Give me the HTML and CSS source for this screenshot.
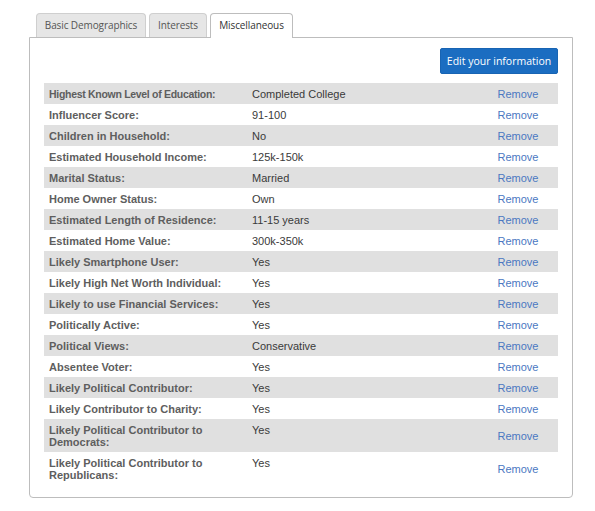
FILE: index.html
```html
<!DOCTYPE html>
<html>
<head>
<meta charset="utf-8">
<link rel="stylesheet" href="styles.css">
</head>
<body>
<div class="wrap">
  <div class="tabs">
    <div class="tab tab-basic">Basic Demographics</div>
    <div class="tab tab-interests">Interests</div>
    <div class="tab tab-misc active">Miscellaneous</div>
  </div>
  <div class="panel">
    <div class="actions"><button class="btn">Edit your information</button></div>
    <table class="info">
      <tr><th class="tight">Highest Known Level of Education:</th><td class="val">Completed College</td><td class="rm"><a>Remove</a></td></tr>
      <tr><th>Influencer Score:</th><td class="val">91-100</td><td class="rm"><a>Remove</a></td></tr>
      <tr><th>Children in Household:</th><td class="val">No</td><td class="rm"><a>Remove</a></td></tr>
      <tr><th>Estimated Household Income:</th><td class="val">125k-150k</td><td class="rm"><a>Remove</a></td></tr>
      <tr><th>Marital Status:</th><td class="val">Married</td><td class="rm"><a>Remove</a></td></tr>
      <tr><th>Home Owner Status:</th><td class="val">Own</td><td class="rm"><a>Remove</a></td></tr>
      <tr><th>Estimated Length of Residence:</th><td class="val">11-15 years</td><td class="rm"><a>Remove</a></td></tr>
      <tr><th>Estimated Home Value:</th><td class="val">300k-350k</td><td class="rm"><a>Remove</a></td></tr>
      <tr><th>Likely Smartphone User:</th><td class="val">Yes</td><td class="rm"><a>Remove</a></td></tr>
      <tr><th>Likely High Net Worth Individual:</th><td class="val">Yes</td><td class="rm"><a>Remove</a></td></tr>
      <tr><th>Likely to use Financial Services:</th><td class="val">Yes</td><td class="rm"><a>Remove</a></td></tr>
      <tr><th>Politically Active:</th><td class="val">Yes</td><td class="rm"><a>Remove</a></td></tr>
      <tr><th>Political Views:</th><td class="val">Conservative</td><td class="rm"><a>Remove</a></td></tr>
      <tr><th>Absentee Voter:</th><td class="val">Yes</td><td class="rm"><a>Remove</a></td></tr>
      <tr><th>Likely Political Contributor:</th><td class="val">Yes</td><td class="rm"><a>Remove</a></td></tr>
      <tr><th>Likely Contributor to Charity:</th><td class="val">Yes</td><td class="rm"><a>Remove</a></td></tr>
      <tr><th>Likely Political Contributor to<br>Democrats:</th><td class="val">Yes</td><td class="rm"><a>Remove</a></td></tr>
      <tr><th>Likely Political Contributor to<br>Republicans:</th><td class="val">Yes</td><td class="rm"><a>Remove</a></td></tr>
    </table>
  </div>
</div>
</body>
</html>
```
FILE: styles.css
```css
html, body {
  margin: 0;
  padding: 0;
  background: #fff;
}
body {
  font-family: "Liberation Sans", Arial, sans-serif;
}
.wrap {
  width: 544px;
  margin: 13px 0 0 29px;
}
.tabs {
  display: flex;
  gap: 3px;
  padding-left: 7px;
  position: relative;
  z-index: 1;
}
.tab {
  font-family: "Open Sans", sans-serif;
  font-size: 10px;
  letter-spacing: -0.1px;
  color: #555;
  background: #e6e6e6;
  border: 1px solid #cfcfcf;
  border-bottom: none;
  border-radius: 4px 4px 0 0;
  height: 23px;
  line-height: 23px;
  padding: 0;
  text-align: center;
  box-sizing: content-box;
}
.tab-basic { width: 108px; }
.tab-interests { width: 56px; }
.tab-misc { width: 81px; }
.tab.active {
  background: #fff;
  color: #333;
  border-color: #bdbdbd;
  height: 24px;
  margin-bottom: -1px;
}
.panel {
  border: 1px solid #bdbdbd;
  border-radius: 0 0 4px 4px;
  padding: 10px 14px 12px 14px;
}
.actions {
  display: flex;
  justify-content: flex-end;
  margin-bottom: 9px;
}
.btn {
  font-family: "Open Sans", sans-serif;
  font-size: 10.5px;
  color: #fff;
  background: #1b6dc1;
  border: 1px solid #1864b3;
  border-radius: 2px;
  width: 118px;
  height: 26px;
  padding: 0;
}
.info {
  width: 514px;
  border-collapse: collapse;
  font-size: 11px;
  line-height: 12px;
}
.info tr:nth-child(odd) {
  background: #e0e0e0;
}
.info th, .info td {
  padding: 5px 5px 4px 5px;
  vertical-align: top;
  text-align: left;
}
.info th {
  width: 193px;
  color: #5e5e5e;
  font-weight: bold;
}
.info th.tight {
  font-size: 10.5px;
  letter-spacing: -0.3px;
}
.info td.val {
  color: #3a3a3a;
}
.info td.rm {
  width: 70px;
  padding-left: 7px;
  text-align: center;
  vertical-align: middle;
}
.info td.rm a {
  color: #4b78c2;
}
```
